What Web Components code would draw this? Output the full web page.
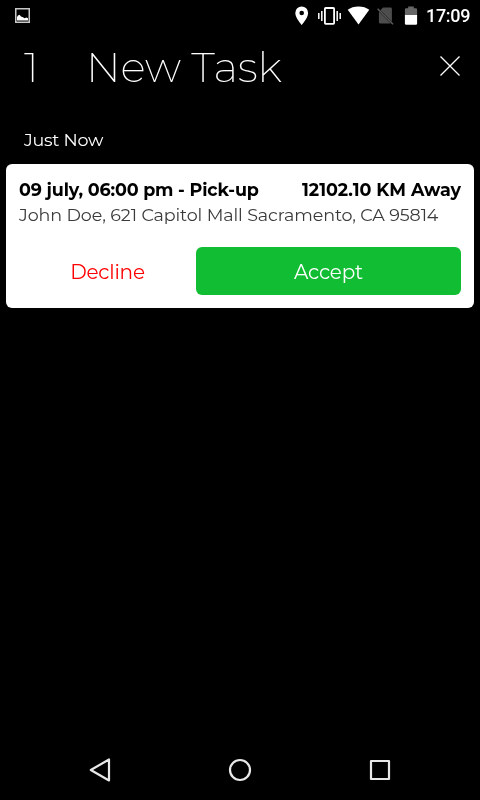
<!DOCTYPE html>
<html lang="en">
<head>
<meta charset="utf-8">
<title>New Task</title>
<style>
    body {
        margin: 0;
        background: #000;
        color: #fff;
        font-family: Montserrat, Inter, "Open Sans", sans-serif;
    }
</style>
</head>
<body>
<task-screen></task-screen>
<script>
class StatusBar extends HTMLElement {
    connectedCallback() {
        this.attachShadow({ mode: 'open' });
        this.shadowRoot.innerHTML = `
            <style>
                :host {
                    display: flex;
                    align-items: center;
                    justify-content: space-between;
                    height: 32px;
                    padding: 0 10px 0 15px;
                    box-sizing: border-box;
                }

                svg {
                    display: block;
                }

                .system {
                    display: flex;
                    align-items: center;
                }

                .time {
                    width: 44px;
                    margin-left: 8px;
                    font: 500 18px/32px Roboto, sans-serif;
                    letter-spacing: -.3px;
                    white-space: nowrap;
                }
            </style>
            <svg width="15" height="16" viewBox="0 0 15 16">
                <rect x=".75" y=".75" width="13.5" height="13.5" fill="none" stroke="#c8c8c8" stroke-width="1.5"/>
                <path d="M2 12.5V9l1-1.5 1.5-.8L6 8.5l2 .8 1.5 1 2-.8 1.5.8v2.2z" fill="#fff"/>
            </svg>
            <div class="system">
                <svg width="124" height="32" viewBox="294 0 124 32">
                    <path fill="#fff" fill-rule="evenodd" d="M301.7 6.5a6.4 6.4 0 0 0-6.4 6.4c0 4.8 6.4 12 6.4 12s6.4-7.2 6.4-12a6.4 6.4 0 0 0-6.4-6.4zm0 4.2a2.3 2.3 0 1 1 0 4.6 2.3 2.3 0 0 1 0-4.6z"/>
                    <rect x="324.9" y="8" width="9.2" height="15.8" rx=".8" fill="none" stroke="#fff" stroke-width="1.8"/>
                    <path d="M318.8 13v6M321.8 11v10M340.2 13v6M337.2 11v10" stroke="#fff" stroke-width="1.5"/>
                    <path d="M347.7 9.8C350.5 7.7 354.3 6.5 358.5 6.5s8 1.2 10.8 3.3L358.5 24.5z" fill="#fff"/>
                    <path d="M383 7.4h7.5q1.4 0 1.4 1.4v13L380.4 10.2zM378.9 11.5l11.9 12h-10.4q-1.5 0-1.5-1.5z" fill="#4d4d4d"/>
                    <path d="m377.6 8.8 15.4 15.5" stroke="#5a5a5a" stroke-width="1.5"/>
                    <path d="M404.9 15.5V9.5q0-1.2 1.2-1.2h2.1V6.5h5.6v1.8h2.1q1.2 0 1.2 1.2v6z" fill="#666"/>
                    <path d="M404.9 15h12.2v8.5q0 1.2-1.2 1.2h-9.8q-1.2 0-1.2-1.2z" fill="#fff"/>
                </svg>
                <span class="time">17:09</span>
            </div>
        `;
    }
}

class ScreenHeader extends HTMLElement {
    connectedCallback() {
        this.attachShadow({ mode: 'open' });
        this.shadowRoot.innerHTML = `
            <style>
                :host {
                    display: flex;
                    align-items: center;
                    height: 68px;
                    padding: 0 20px 0 24px;
                    box-sizing: border-box;
                    font-size: 42.5px;
                    font-weight: 240;
                    line-height: 66px;
                    white-space: nowrap;
                }

                span {
                    padding-top: 2px;
                }

                .count {
                    width: 62px;
                }

                .title {
                    flex: 1;
                    letter-spacing: -.2px;
                }
            </style>
            <span class="count"><slot name="count"></slot></span>
            <span class="title"><slot></slot></span>
            <svg width="20" height="20" viewBox="0 0 20 20">
                <path d="M.5.5l19 19m0-19l-19 19" stroke="#fff" stroke-width="1.3"/>
            </svg>
        `;
    }
}

class ActionButton extends HTMLElement {
    connectedCallback() {
        this.attachShadow({ mode: 'open' });
        this.shadowRoot.innerHTML = `
            <style>
                :host {
                    display: block;
                    height: 48px;
                    border-radius: 6px;
                    font-size: 20px;
                    line-height: 50px;
                    letter-spacing: -.2px;
                    text-align: center;
                    color: #f00;
                }

                :host([primary]) {
                    background: #11be33;
                    color: #fff;
                }
            </style>
            <slot></slot>
        `;
    }
}

class TaskCard extends HTMLElement {
    connectedCallback() {
        this.attachShadow({ mode: 'open' });
        this.shadowRoot.innerHTML = `
            <style>
                :host {
                    display: block;
                    height: 144px;
                    margin: 0 6px;
                    padding: 13px 13px 12px;
                    box-sizing: border-box;
                    border-radius: 6px;
                    background: #fff;
                    color: #000;
                    font-size: 17.5px;
                    line-height: 26px;
                    white-space: nowrap;
                }

                .top {
                    display: flex;
                    justify-content: space-between;
                    height: 25px;
                    font-weight: 700;
                }

                .address {
                    color: #3a3a3a;
                    letter-spacing: -.1px;
                }

                .actions {
                    display: grid;
                    grid-template-columns: 177px 1fr;
                    margin-top: 19px;
                }
            </style>
            <div class="top">
                <slot name="when"></slot>
                <slot name="distance"></slot>
            </div>
            <div class="address"><slot name="address"></slot></div>
            <div class="actions"><slot name="actions"></slot></div>
        `;
    }
}

class NavBar extends HTMLElement {
    connectedCallback() {
        this.attachShadow({ mode: 'open' });
        this.shadowRoot.innerHTML = `
            <style>
                :host {
                    display: flex;
                    align-items: center;
                    justify-content: space-between;
                    height: 60px;
                    padding: 0 88px;
                }

                svg {
                    fill: none;
                    stroke: #e8e8e8;
                    stroke-width: 2.2;
                    stroke-linejoin: round;
                }
            </style>
            <svg width="24" height="24" viewBox="0 0 24 24"><path d="M21 1.5v21L2.8 12z"/></svg>
            <svg width="24" height="24" viewBox="0 0 24 24"><circle cx="12" cy="12" r="10"/></svg>
            <svg width="24" height="24" viewBox="0 0 24 24"><path d="M3 3h18v18H3z"/></svg>
        `;
    }
}

class TaskScreen extends HTMLElement {
    connectedCallback() {
        this.attachShadow({ mode: 'open' });
        this.shadowRoot.innerHTML = `
            <style>
                :host {
                    display: flex;
                    flex-direction: column;
                    height: 800px;
                    overflow: hidden;
                    will-change: transform;
                }

                h2 {
                    margin: 27px 0 10.5px 24px;
                    font-size: 17.5px;
                    font-weight: 400;
                    line-height: 26px;
                    letter-spacing: -.25px;
                }

                .date {
                    letter-spacing: -.15px;
                }

                nav-bar {
                    margin-top: auto;
                }
            </style>
            <status-bar></status-bar>
            <screen-header><span slot="count">1</span>New Task</screen-header>
            <h2>Just Now</h2>
            <task-card>
                <span slot="when" class="date">09 july, 06:00 pm - Pick-up</span>
                <span slot="distance">12102.10 KM Away</span>
                <span slot="address">John Doe, 621 Capitol Mall Sacramento, CA 95814</span>
                <action-button slot="actions">Decline</action-button>
                <action-button slot="actions" primary>Accept</action-button>
            </task-card>
            <nav-bar></nav-bar>
        `;
    }
}

customElements.define('status-bar', StatusBar);
customElements.define('screen-header', ScreenHeader);
customElements.define('action-button', ActionButton);
customElements.define('task-card', TaskCard);
customElements.define('nav-bar', NavBar);
customElements.define('task-screen', TaskScreen);
</script>
</body>
</html>
